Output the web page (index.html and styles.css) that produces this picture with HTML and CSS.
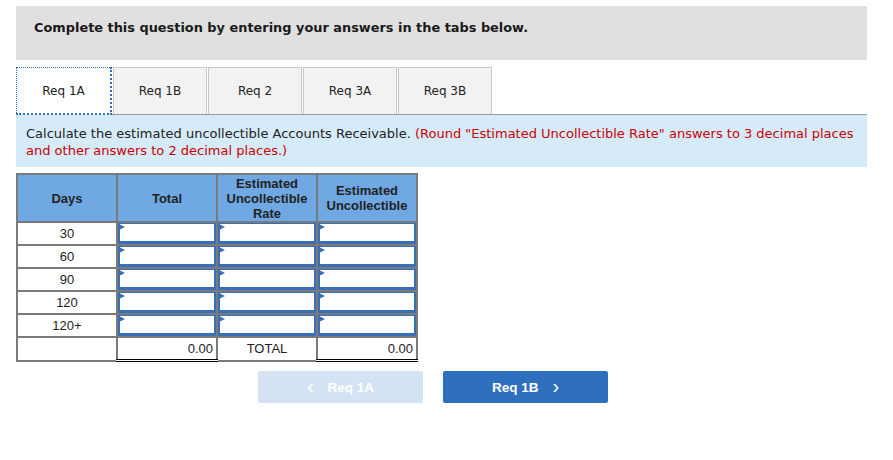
FILE: index.html
```html
<!DOCTYPE html>
<html>
<head>
<meta charset="utf-8">
<link rel="stylesheet" href="styles.css">
</head>
<body>
<div class="page">
  <div class="banner">Complete this question by entering your answers in the tabs below.</div>
  <div class="tabs">
    <div class="tab active">Req 1A</div>
    <div class="tab">Req 1B</div>
    <div class="tab">Req 2</div>
    <div class="tab">Req 3A</div>
    <div class="tab">Req 3B</div>
  </div>
  <div class="info">Calculate the estimated uncollectible Accounts Receivable. <span class="red">(Round "Estimated Uncollectible Rate" answers to 3 decimal places and other answers to 2 decimal places.)</span></div>
  <table class="grid">
    <thead>
      <tr>
        <th>Days</th>
        <th>Total</th>
        <th>Estimated<br>Uncollectible<br>Rate</th>
        <th>Estimated<br>Uncollectible</th>
      </tr>
    </thead>
    <tbody>
      <tr><td class="lbl">30</td><td class="in"><div class="box"></div></td><td class="in"><div class="box"></div></td><td class="in"><div class="box"></div></td></tr>
      <tr><td class="lbl">60</td><td class="in"><div class="box"></div></td><td class="in"><div class="box"></div></td><td class="in"><div class="box"></div></td></tr>
      <tr><td class="lbl">90</td><td class="in"><div class="box"></div></td><td class="in"><div class="box"></div></td><td class="in"><div class="box"></div></td></tr>
      <tr><td class="lbl">120</td><td class="in"><div class="box"></div></td><td class="in"><div class="box"></div></td><td class="in"><div class="box"></div></td></tr>
      <tr><td class="lbl">120+</td><td class="in"><div class="box"></div></td><td class="in"><div class="box"></div></td><td class="in"><div class="box"></div></td></tr>
      <tr class="totals"><td></td><td class="sum">0.00</td><td class="mid">TOTAL</td><td class="sum">0.00</td></tr>
    </tbody>
  </table>
  <div class="nav">
    <div class="btn prev"><span class="chev">&lsaquo;</span>Req 1A</div>
    <div class="btn next">Req 1B<span class="chev r">&rsaquo;</span></div>
  </div>
</div>
</body>
</html>
```
FILE: styles.css
```css
html, body { margin: 0; padding: 0; background: #fff; }
.page { padding: 6px 26px 0 16px; width: 851px; }
.banner {
  background: #e0e0e0;
  height: 54px;
  box-sizing: border-box;
  padding: 14px 0 0 18px;
  font-family: "DejaVu Sans", Verdana, sans-serif;
  font-weight: bold;
  font-size: 12.9px;
  color: #1a1a1a;
}
.tabs { display: flex; margin-top: 7px; border-bottom: 1px solid #9a9a9a; height: 47px; }
.tab {
  width: 94px; height: 47px;
  box-sizing: border-box;
  background: #f2f2f2;
  border: 1px solid #c8c8c8;
  border-bottom: none;
  margin-right: 1px;
  display: flex; align-items: center; justify-content: center;
  font-family: "DejaVu Sans", Verdana, sans-serif;
  font-size: 12px; color: #222;
}
.tab.active {
  width: 96px; height: 48px;
  background: #fff;
  border: 1px dotted #2f6fbd;
  border-width: 1px 2px 2px 1px;
  border-style: dotted;
  margin-bottom: -1px;
}
.info {
  background: #d6ebf9;
  height: 52px;
  box-sizing: border-box;
  padding: 10px 10px 0 10px;
  font-family: "DejaVu Sans", Verdana, sans-serif;
  font-size: 13px;
  line-height: 17px;
  color: #222;
}
.red { color: #cc0000; }
.grid {
  margin-top: 6px;
  border-collapse: collapse;
  font-family: "Liberation Sans", Arial, sans-serif;
  font-size: 13px;
  color: #222;
  border: 2px solid #7a7a7a;
}
.grid th {
  background: #6fa8e3;
  width: 98px;
  height: 46px;
  padding: 0;
  border: 2px solid #7a7a7a;
  font-weight: bold;
  line-height: 15px;
  color: #222;
}
.grid td { border: 2px solid #7a7a7a; padding: 0; height: 21px; }
.grid td.lbl { text-align: center; background: #fff; }
.grid td.in { padding: 0; line-height: 0; font-size: 0; vertical-align: top; }
.box {
  position: relative;
  height: 17px;
  border: 2px solid #3a6fb8;
  border-top-width: 1px;
  border-bottom-width: 3px;
  background: #fff;
}
.box::before {
  content: "";
  position: absolute; left: -1px; top: 0;
  border-left: 6px solid #3a6fb8;
  border-top: 3px solid transparent;
  border-bottom: 3px solid transparent;
}
.totals td { height: 21px; }
.totals td.sum {
  text-align: right;
  padding-right: 3px;
  border-top: 1px solid #000;
  border-bottom: 3px double #000;
}
.totals td.mid { text-align: center; }
.nav { display: flex; gap: 20px; margin: 9px 0 0 242px; }
.btn {
  width: 165px; height: 32px;
  border-radius: 2px;
  display: flex; align-items: center; justify-content: center;
  font-family: "Liberation Sans", Arial, sans-serif;
  font-weight: bold; font-size: 13.5px; color: #fff;
}
.prev { background: #d4e3f4; }
.next { background: #2f70be; }
.chev { font-size: 20px; font-weight: normal; margin-right: 14px; line-height: 1; position: relative; top: -1px; }
.chev.r { margin-right: 0; margin-left: 14px; }
```
